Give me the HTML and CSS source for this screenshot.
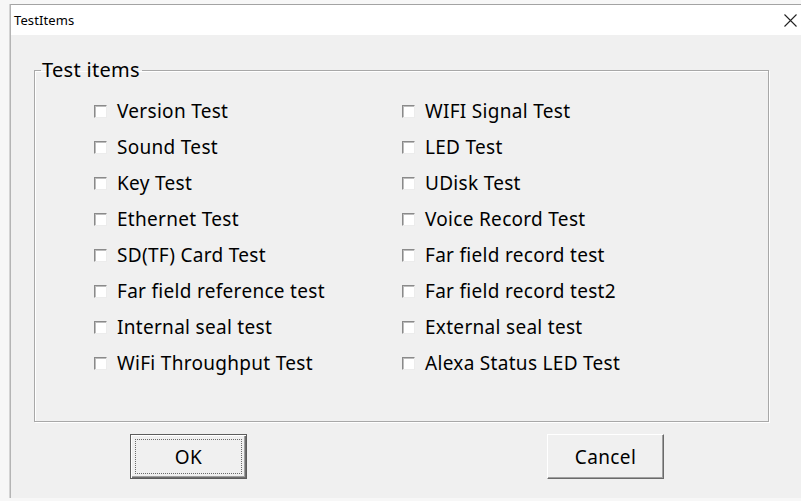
FILE: index.html
```html
<!DOCTYPE html>
<html lang="en">
<head>
<meta charset="utf-8">
<title>TestItems</title>
<link rel="stylesheet" href="styles.css">
</head>
<body>
<div class="desk">
  <div class="window">
    <div class="titlebar">
      <span class="title">TestItems</span>
      <svg class="close" width="13" height="13" viewBox="0 0 13 13"><path d="M0.5 0.5 L12.5 12.5 M12.5 0.5 L0.5 12.5" stroke="#222" stroke-width="1.1" fill="none"/></svg>
    </div>
    <div class="client">
      <fieldset class="group">
        <legend class="legend">Test items</legend>
        <div class="items">
          <label class="item"><span class="box"></span>Version Test</label>
          <label class="item"><span class="box"></span>WIFI Signal Test</label>
          <label class="item"><span class="box"></span>Sound Test</label>
          <label class="item"><span class="box"></span>LED Test</label>
          <label class="item"><span class="box"></span>Key Test</label>
          <label class="item"><span class="box"></span>UDisk Test</label>
          <label class="item"><span class="box"></span>Ethernet Test</label>
          <label class="item"><span class="box"></span>Voice Record Test</label>
          <label class="item"><span class="box"></span>SD(TF) Card Test</label>
          <label class="item"><span class="box"></span>Far field record test</label>
          <label class="item"><span class="box"></span>Far field reference test</label>
          <label class="item"><span class="box"></span>Far field record test2</label>
          <label class="item"><span class="box"></span>Internal seal test</label>
          <label class="item"><span class="box"></span>External seal test</label>
          <label class="item"><span class="box"></span>WiFi Throughput Test</label>
          <label class="item"><span class="box"></span>Alexa Status LED Test</label>
        </div>
      </fieldset>
      <div class="buttons">
        <button class="btn btn-default">OK</button>
        <button class="btn btn-cancel">Cancel</button>
      </div>
    </div>
  </div>
</div>
</body>
</html>
```

FILE: styles.css
```css
html, body {
  margin: 0;
  padding: 0;
  background: #f7f7f7;
  width: 801px;
  height: 501px;
  overflow: hidden;
}

.desk {
  padding: 4px 0 0 10px;
  height: 497px;
  box-sizing: border-box;
}

.window {
  height: 100%;
  background: #f0f0f0;
  border-top: 1px solid #a3a3a3;
  border-left: 1px solid #b4b4b4;
  box-shadow: -1px 0 0 #d4d4d4;
  font-family: "Noto Sans", "Open Sans", sans-serif;
  color: #000;
}

.titlebar {
  height: 30px;
  background: #fff;
  display: flex;
  align-items: center;
  justify-content: space-between;
  padding: 0 4px 0 3px;
}

.title {
  font-size: 13px;
  letter-spacing: 0.1px;
}

.close {
  display: block;
}

.client {
  padding-top: 25px;
}

.group {
  margin: 0 0 0 23px;
  width: 735px;
  height: 362px;
  box-sizing: border-box;
  padding: 0;
  border: 1px solid #a8a8a8;
  box-shadow: 1px 1px 0 #fff, inset 1px 1px 0 #fff;
}

.legend {
  font-size: 20px;
  line-height: 20px;
  letter-spacing: 0.3px;
  padding: 0 2px 0 1px;
  margin-left: 6px;
}

.items {
  display: grid;
  grid-template-columns: 308px 308px;
  grid-auto-rows: 36px;
  padding: 13px 0 0 59px;
}

.item {
  display: flex;
  align-items: center;
  gap: 10px;
  font-size: 19px;
  letter-spacing: 0.3px;
  white-space: nowrap;
}

.box {
  width: 13px;
  height: 13px;
  box-sizing: border-box;
  background: #fff;
  border: 1px solid;
  border-color: #8a8a8a #ececec #ececec #8a8a8a;
  box-shadow: inset 1px 1px 0 #bdbdbd;
  flex: none;
}

.buttons {
  display: flex;
  padding-top: 12px;
}

.btn {
  height: 45px;
  font-family: "Noto Sans", "Open Sans", sans-serif;
  font-size: 19px;
  letter-spacing: 0.4px;
  color: #000;
  background: #f0f0f0;
  padding: 0;
  position: relative;
}

.btn-default {
  width: 117px;
  margin-left: 119px;
  border: 1px solid #5c5c5c;
  box-shadow: inset 1px 1px 0 #fff, inset -1px -1px 0 #6e6e6e, inset -2px -2px 0 #a0a0a0;
}

.btn-default::after {
  content: "";
  position: absolute;
  inset: 4px;
  border: 1px dotted #6a6a6a;
}

.btn-cancel {
  width: 117px;
  margin-left: 300px;
  border: 1px solid;
  border-color: #fff #6a6a6a #6a6a6a #fff;
  box-shadow: inset -1px -1px 0 #a0a0a0;
}
```
